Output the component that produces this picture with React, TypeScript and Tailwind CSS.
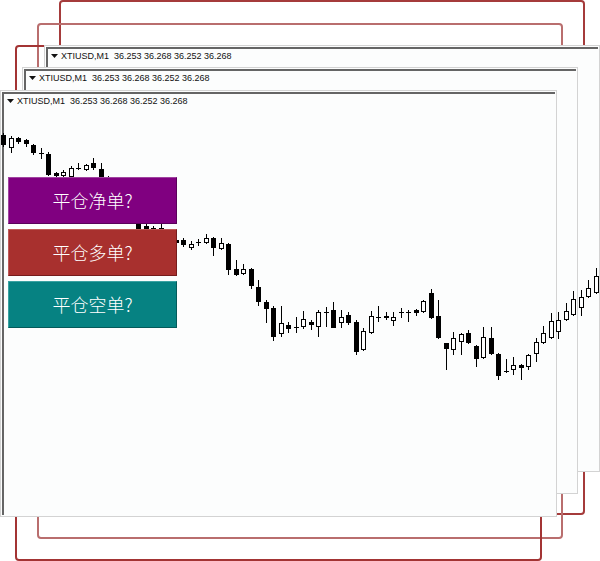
import React from 'react';

// candle data: [wickTop, wickBottom, bodyTop, bodyBottom, kind] kind: 1 = bear (filled), 0 = bull (hollow), 2 = doji
const candles: [number, number, number, number, number][] = [
    [133, 147, 135, 145, 1], [136, 153, 138, 148, 0], [137, 144, 138, 142, 1], [139, 147, 140, 144, 1],
    [144, 155, 145, 153, 1], [148, 159, 153, 153, 2], [152, 176, 154, 175, 1], [172, 177, 173, 176, 1],
    [170, 177, 172, 176, 0], [166, 178, 168, 177, 0], [163, 170, 168, 168, 2], [164, 171, 165, 170, 0],
    [158, 170, 163, 168, 1], [163, 182, 169, 180, 1], [176, 197, 178, 195, 1], [188, 202, 190, 200, 0],
    [193, 212, 195, 210, 1], [203, 220, 205, 218, 1], [213, 230, 215, 229, 1], [224, 234, 226, 232, 1],
    [226, 236, 228, 234, 0], [224, 232, 228, 228, 2], [230, 240, 232, 238, 1], [238, 246, 240, 243, 1],
    [238, 247, 240, 245, 1], [241, 250, 244, 248, 0], [239, 246, 242, 242, 2], [234, 244, 238, 243, 0],
    [237, 256, 238, 248, 1], [238, 250, 243, 249, 0], [243, 275, 244, 270, 1], [260, 276, 269, 275, 1],
    [264, 275, 269, 274, 0], [268, 289, 269, 286, 1], [280, 306, 287, 302, 1], [300, 323, 302, 309, 1],
    [306, 341, 308, 337, 1], [306, 337, 323, 334, 0], [322, 333, 325, 329, 1], [317, 333, 327, 327, 2],
    [311, 329, 319, 327, 0], [320, 330, 322, 325, 1], [310, 337, 312, 327, 0], [307, 327, 312, 312, 2],
    [302, 328, 310, 328, 1], [310, 328, 317, 323, 0], [312, 325, 315, 323, 1], [320, 355, 322, 352, 1],
    [328, 351, 331, 350, 0], [311, 334, 316, 333, 0], [306, 322, 317, 317, 2], [312, 320, 316, 318, 1],
    [312, 326, 317, 321, 0], [308, 318, 312, 312, 2], [310, 322, 312, 312, 2], [309, 316, 310, 313, 1],
    [300, 313, 301, 312, 0], [289, 319, 293, 318, 1], [300, 339, 316, 338, 1], [343, 370, 343, 349, 1],
    [332, 355, 338, 350, 0], [333, 355, 334, 342, 0], [330, 344, 333, 343, 1], [345, 367, 346, 359, 1],
    [327, 359, 337, 358, 0], [327, 355, 338, 354, 1], [353, 380, 354, 376, 1], [359, 373, 371, 371, 2],
    [357, 375, 365, 370, 0], [364, 380, 365, 368, 1], [354, 370, 355, 367, 0], [338, 362, 342, 354, 0],
    [326, 344, 333, 343, 0], [313, 339, 321, 338, 0], [312, 339, 320, 332, 0], [303, 321, 311, 320, 0],
    [291, 316, 299, 315, 0], [290, 316, 297, 308, 0], [280, 298, 288, 297, 0], [268, 294, 276, 293, 0],
];

function CandleChart() {
    return (
        <svg className="absolute inset-0 z-10 pointer-events-none" width={600} height={561} shapeRendering="crispEdges">
            {candles.map(([wt, wb, bt, bb, kind], i) => {
                const x = Math.round(3 + i * 7.5);
                return (
                    <g key={i}>
                        <line x1={x + 0.5} x2={x + 0.5} y1={wt} y2={wb} stroke="#000" strokeWidth={1} />
                        {kind === 1 && <rect x={x - 2} y={bt} width={5} height={Math.max(bb - bt, 1)} fill="#000" />}
                        {kind === 0 && (
                            <rect x={x - 1.5} y={bt + 0.5} width={4} height={Math.max(bb - bt - 1, 1)} fill="#fff" stroke="#000" strokeWidth={1} />
                        )}
                        {kind === 2 && <rect x={x - 2} y={bt} width={5} height={1} fill="#000" />}
                    </g>
                );
            })}
        </svg>
    );
}

function ChartWindow({ pos }: { pos: string }) {
    return (
        <div className={`absolute h-[427px] border border-[#d3d3d3] bg-[#fcfdfd] p-px ${pos}`}>
            <div className="h-full border-t-2 border-l-2 border-[#656565]">
                <div className="flex items-center gap-[3px] pl-[3px] pt-px text-[9px] leading-[12px] text-[#111] whitespace-pre font-['Liberation_Sans',Arial,sans-serif]">
                    <svg width="7" height="4" viewBox="0 0 7 4">
                        <path d="M0 0H7L3.5 4Z" fill="#111" />
                    </svg>
                    <span>XTIUSD,M1  36.253 36.268 36.252 36.268</span>
                </div>
            </div>
        </div>
    );
}

const buttons = [
    { label: '平仓净单?', cls: 'bg-[#800080] border-t-[#a044a0] border-l-[#a044a0] border-b-[#5a005a] border-r-[#5a005a]' },
    { label: '平仓多单?', cls: 'bg-[#a8302e] border-t-[#c05a58] border-l-[#c05a58] border-b-[#761c1c] border-r-[#761c1c]' },
    { label: '平仓空单?', cls: 'bg-[#068282] border-t-[#3aa2a2] border-l-[#3aa2a2] border-b-[#045a5a] border-r-[#045a5a]' },
];

export default function App() {
    return (
        <div className="relative w-[600px] h-[561px] bg-white overflow-hidden">
            {/* red outline frames behind the charts */}
            <div className="absolute left-[59px] top-0 w-[526px] h-[515px] rounded-[4px] border-2 border-[#a53b3b]" />
            <div className="absolute left-[37px] top-[23px] w-[526px] h-[516px] rounded-[4px] border-2 border-[#b96e6e]" />
            <div className="absolute left-[15px] top-[45px] w-[527px] h-[516px] rounded-[4px] border-2 border-[#a33434]" />

            <ChartWindow pos="left-[44px] top-[45px] w-[556px]" />
            <ChartWindow pos="left-[22px] top-[67px] w-[556px]" />
            <ChartWindow pos="left-0 top-[90px] w-[557px]" />

            <CandleChart />

            <div className="absolute left-[8px] top-[177px] z-20 flex w-[169px] flex-col gap-[5px]">
                {buttons.map((b) => (
                    <div
                        key={b.label}
                        className={`flex h-[47px] items-center justify-center border text-[18px] text-white font-['Noto_Sans_CJK_SC',sans-serif] font-light ${b.cls}`}
                    >
                        {b.label}
                    </div>
                ))}
            </div>
        </div>
    );
}
